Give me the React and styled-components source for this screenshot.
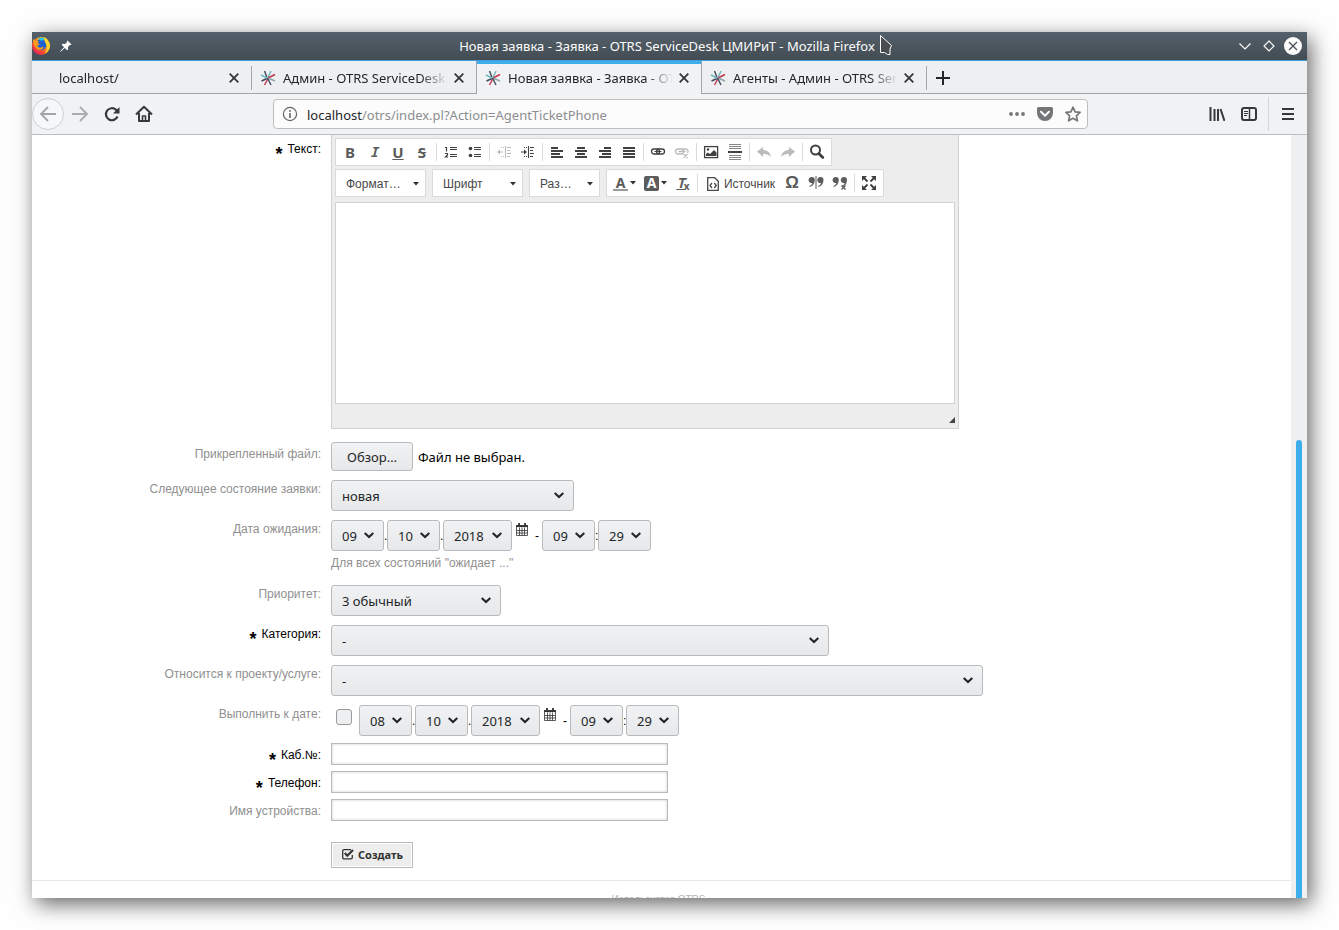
import React from "react";
import styled, { createGlobalStyle, css } from "styled-components";

const GlobalStyle = createGlobalStyle`
  *, *::before, *::after {
    box-sizing: border-box;
  }
  body {
    margin: 0;
    background: #fefefe;
    font-family: "Noto Sans", sans-serif;
    font-size: 13px;
    color: #232629;
  }
  button, input, select, textarea {
    font: inherit;
    color: inherit;
    margin: 0;
  }
  button {
    cursor: pointer;
  }
  svg {
    display: block;
    flex: none;
  }
`;

const tabs = [
  { id: 1, title: "localhost/", plain: true },
  { id: 2, title: "Админ - OTRS ServiceDesk ЦМИРиТ" },
  { id: 3, title: "Новая заявка - Заявка - OTRS ServiceDesk", active: true },
  { id: 4, title: "Агенты - Админ - OTRS ServiceDesk" },
];

/* ---------- icons ---------- */

const Line = ({ size = 16, d, width = 2, children, ...rest }) => (
  <svg
    width={size}
    height={size}
    viewBox={`0 0 ${size} ${size}`}
    fill="none"
    stroke="currentColor"
    strokeWidth={width}
    {...rest}
  >
    {d && <path d={d} />}
    {children}
  </svg>
);

const Firefox = () => (
  <svg width="20" height="20" viewBox="0 0 20 20">
    <defs>
      <linearGradient id="fox" x1="1" y1="0" x2="0.2" y2="1">
        <stop offset="0" stopColor="#fff44f" />
        <stop offset="0.35" stopColor="#ffb21c" />
        <stop offset="0.65" stopColor="#ff5a2a" />
        <stop offset="1" stopColor="#e01563" />
      </linearGradient>
    </defs>
    <circle cx="9" cy="10" r="9" fill="url(#fox)" />
    <circle cx="9" cy="8.5" r="5.6" fill="#1b5fd0" />
    <path d="M6 3c2-1.8 6-1.5 7.5 1-2-.5-3 .2-3.5 1z" fill="#22c5f5" />
    <path
      d="M1 3l3 2c1-.5 2-.3 3 0L5.5 7c1.500.2 2 .8 2 1.5-1 .6-2 .8-2 1.8 1 2 4 1.5 5 .5 1 0 1.500.7.5 1.7C9 14.500 5 14.500 3 11 1.500 8.500.8 6 1 3z"
      fill="#ff9a1f"
    />
    <path d="M12 1c4 2 6.500 6 5.500 11-1 3-3 5-5 6 3-4 3-7 1.500-10C13 6 12 4 12 1z" fill="#ffd52e" />
  </svg>
);

const Pin = () => (
  <svg width="12" height="12" viewBox="0 0 12 12">
    <path
      d="M7.500.5l4 4-1 .6-.6-.2-2 2 .3 2.600-1 .8L4.800 7.900.7 11.800.2 11.300 4.100 7.200 1.700 4.800l.8-1 2.600.3 2-2-.2-.6z"
      fill="#fff"
    />
  </svg>
);

const OtrsMark = () => (
  <svg width="16" height="16" viewBox="0 0 16 16" fill="none" strokeWidth="1.4">
    <path d="M4.500 1L7 7.500M1.500 11L7 8.500" stroke="#3f4a5e" />
    <path d="M11 1L8 7.500M1 5l6 3" stroke="#6fb5bd" />
    <path d="M15 4.500L8 8M8 8.500L4.500 15" stroke="#c8324b" />
    <path d="M8 8l7 3" stroke="#8ea3ad" />
    <path d="M7.500 8l3.500 7" stroke="#3f4a5e" />
  </svg>
);

const Cross = () => <Line size={10} d="M.7.7l8.600 8.600M9.300.7L.7 9.300" width={1.8} stroke="#31363b" />;

const Chevron = () => (
  <svg width="10" height="12" viewBox="0 0 10 12" fill="none" stroke="currentColor" strokeWidth="2.1">
    <path d="M.7 3L5 7l4.300-4" />
  </svg>
);

const Calendar = () => (
  <svg width="12" height="13" viewBox="0 0 12 13" fill="none" stroke="#333">
    <path d="M.5 2.500h11v10H.5zM3.500 4.500v8M6 4.500v8M8.500 4.500v8M.5 7.500h11M.5 10h11" strokeWidth="0.8" />
    <path d="M0 3.200h12" strokeWidth="1.8" />
    <path d="M3 0v3M9 0v3" strokeWidth="1.8" />
  </svg>
);

const Caret = () => (
  <svg width="6" height="4" viewBox="0 0 6 4">
    <path d="M0 0h6L3 3.500z" fill="#333" />
  </svg>
);

const Quote = ({ x }) => (
  <path
    transform={`translate(${x} 2)`}
    d="M3 0a3 3 0 0 1 3 3c0 3.500-2 6-5 7l-.4-1c1.800-.8 2.700-1.800 2.900-3.100A3 3 0 1 1 3 0z"
    fill="currentColor"
    stroke="none"
  />
);

const icons = {
  numbered: (
    <Line d="M7 3.500h7M7 5.500h7M7 10.500h7M7 12.500h7" width={1}>
      <path d="M2 3.500h1.500v4M2 9.500h2.500v1.500L2.500 13h2.500" strokeWidth="1.2" />
    </Line>
  ),
  bulleted: (
    <Line d="M7 3.500h7M7 5.500h7M7 10.500h7M7 12.500h7" width={1}>
      <circle cx="3.5" cy="4.5" r="1.8" fill="currentColor" stroke="none" />
      <circle cx="3.5" cy="11.5" r="1.8" fill="currentColor" stroke="none" />
    </Line>
  ),
  outdent: (
    <Line d="M9.500 2v12M11 3.500h4M11 6.500h3M11 9.500h4M11 12.500h3M2 8h5" width={1}>
      <path d="M1 8l3-2.500v5z" fill="currentColor" stroke="none" />
      <path d="M5 3.500h3M5 12.500h3" strokeDasharray="1 1" />
    </Line>
  ),
  indent: (
    <Line d="M8.500 2v12M10 3.500h4M10 6.500h3M10 9.500h4M10 12.500h3M1 8h5" width={1}>
      <path d="M7 8L4 5.500v5z" fill="currentColor" stroke="none" />
      <path d="M4 3.500h3M4 12.500h3" strokeDasharray="1 1" />
    </Line>
  ),
  left: <Line d="M2 4h7M2 7h12M2 10h9M2 13h12" />,
  center: <Line d="M4 4h8M2 7h12M4 10h8M2 13h12" />,
  right: <Line d="M7 4h7M2 7h12M5 10h9M2 13h12" />,
  justify: <Line d="M2 4h12M2 7h12M2 10h12M2 13h12" />,
  link: (
    <Line width={1.3}>
      <rect x="1.5" y="5" width="8" height="5" rx="2.5" />
      <rect x="6.5" y="5" width="8" height="5" rx="2.5" />
      <path d="M4.500 7.500h7" strokeWidth="1" />
    </Line>
  ),
  unlink: (
    <Line width={1.3}>
      <rect x="1.5" y="5" width="8" height="5" rx="2.5" />
      <path d="M8 5h4a2.500 2.500 0 0 1 1.500 4M4.500 7.500h7M9.500 10l4 4M13.500 10l-4 4" />
    </Line>
  ),
  image: (
    <Line width={1.3}>
      <rect x="1.6" y="2.6" width="13" height="11" />
      <circle cx="5" cy="5.5" r="1.2" fill="currentColor" stroke="none" />
      <path d="M3 12V10l2-1.500 2 1.500 4-4 2.500 2.500V12z" fill="currentColor" stroke="none" />
    </Line>
  ),
  rule: (
    <Line width={1}>
      <path d="M2 .5h12M2 2.500h12M2 4.500h12M2 11.500h12M2 13.500h12M2 15.500h12" stroke="#888" />
      <path d="M1 8h14" strokeWidth="2" />
    </Line>
  ),
  undo: (
    <Line>
      <path d="M1 7.500L7 3v3c4 0 7 2 8 7-2-2.500-5-3-8-3v3z" fill="currentColor" stroke="none" />
    </Line>
  ),
  redo: (
    <Line>
      <path d="M15 7.500L9 3v3c-4 0-7 2-8 7 2-2.500 5-3 8-3v3z" fill="currentColor" stroke="none" />
    </Line>
  ),
  find: (
    <Line>
      <circle cx="6.5" cy="6" r="4.5" />
      <path d="M9.800 9.500l4 4" strokeWidth="2.8" strokeLinecap="round" />
    </Line>
  ),
  source: (
    <Line width={1.3}>
      <path d="M2.700 1.700h7l3.600 3.600v9H2.700z" />
      <path d="M7 7l-2 2.500 2 2.500M9.300 7l2 2.500-2 2.500" />
    </Line>
  ),
  quotes: (
    <Line width={1}>
      <Quote x={0.8} />
      <path d="M8 1v13" />
      <Quote x={9.5} />
    </Line>
  ),
  unquotes: (
    <Line width={1.4}>
      <Quote x={0.8} />
      <Quote x={9} />
      <path d="M9.500 10.500l4 4M13.500 10.500l-4 4" />
    </Line>
  ),
  maximize: (
    <Line width={1.8}>
      <path d="M2 2l4.500 4.500M14 2L9.500 6.500M2 14l4.500-4.500M14 14L9.500 9.500" />
      <path
        d="M1 1h5L1 6zM15 1h-5l5 5zM1 15h5L1 10zM15 15h-5l5-5z"
        fill="currentColor"
        stroke="none"
      />
    </Line>
  ),
};

/* ---------- toolbar ---------- */

const Tool = ({ icon, label, disabled, soft }) => (
  <ToolButton type="button" aria-label={label} disabled={disabled} $soft={soft}>
    {icons[icon]}
  </ToolButton>
);

const EditorToolbar = () => (
  <>
    <ToolRow>
      <ToolGroup>
        <ToolButton type="button" $soft><Letter>B</Letter></ToolButton>
        <ToolButton type="button" $soft><Letter $serif>I</Letter></ToolButton>
        <ToolButton type="button" $soft><Letter $line="underline">U</Letter></ToolButton>
        <ToolButton type="button" $soft><Letter $line="line-through">S</Letter></ToolButton>
        <ToolDivider />
        <Tool icon="numbered" label="Нумерованный список" />
        <Tool icon="bulleted" label="Маркированный список" />
        <ToolDivider />
        <Tool icon="outdent" label="Уменьшить отступ" disabled />
        <Tool icon="indent" label="Увеличить отступ" />
        <ToolDivider />
        <Tool icon="left" label="По левому краю" />
        <Tool icon="center" label="По центру" />
        <Tool icon="right" label="По правому краю" />
        <Tool icon="justify" label="По ширине" />
        <ToolDivider />
        <Tool icon="link" label="Ссылка" />
        <Tool icon="unlink" label="Убрать ссылку" disabled />
        <ToolDivider />
        <Tool icon="image" label="Изображение" />
        <Tool icon="rule" label="Горизонтальная линия" />
        <ToolDivider />
        <Tool icon="undo" label="Отменить" disabled />
        <Tool icon="redo" label="Повторить" disabled />
        <ToolDivider />
        <Tool icon="find" label="Найти" />
      </ToolGroup>
    </ToolRow>
    <ToolRow>
      <Combo type="button">Формат… <Caret /></Combo>
      <Combo type="button">Шрифт <Caret /></Combo>
      <Combo type="button" $small>Раз… <Caret /></Combo>
      <ToolGroup>
        <ToolButton type="button" $wide $soft><ColorLetter>A</ColorLetter><Caret /></ToolButton>
        <ToolButton type="button" $wide $soft><ColorLetter $filled>A</ColorLetter><Caret /></ToolButton>
        <ToolButton type="button" $soft><Letter $serif $line="underline">T</Letter><Small>x</Small></ToolButton>
        <ToolDivider />
        <SourceButton type="button">{icons.source} Источник</SourceButton>
        <ToolButton type="button" $soft><Letter $omega>Ω</Letter></ToolButton>
        <Tool icon="quotes" label="Цитата" soft />
        <Tool icon="unquotes" label="Убрать цитату" soft />
        <ToolDivider />
        <Tool icon="maximize" label="Развернуть" />
      </ToolGroup>
    </ToolRow>
  </>
);

/* ---------- form ---------- */

const Row = ({ label, id, required, offset, children }) => (
  <FormRow>
    <Label htmlFor={id} $required={required} $offset={offset}>
      {required && <Star>*</Star>}
      {label}:
    </Label>
    <Field>{children}</Field>
  </FormRow>
);

const Select = ({ value, width, ...rest }) => (
  <SelectBox $width={width}>
    <select defaultValue={value} {...rest}>
      <option>{value}</option>
    </select>
    <Chevron />
  </SelectBox>
);

const DateTime = ({ id, day }) => (
  <>
    <Select id={id} value={day} width={53} aria-label="День" />
    <Mark>.</Mark>
    <Select value="10" width={53} aria-label="Месяц" />
    <Mark>.</Mark>
    <Select value="2018" width={69} aria-label="Год" />
    <CalendarButton type="button" aria-label="Открыть календарь">
      <Calendar />
    </CalendarButton>
    <Mark $dash>-</Mark>
    <Select value="09" width={53} aria-label="Час" />
    <Mark>:</Mark>
    <Select value="29" width={53} aria-label="Минута" />
  </>
);

const TicketForm = () => (
  <Form onSubmit={(e) => e.preventDefault()}>
    <Row label="Текст" id="body" required offset={5}>
      <Editor>
        <EditorToolbar />
        <EditorText id="body" />
        <EditorFooter>
          <svg width="6" height="6" viewBox="0 0 6 6">
            <path d="M6 0v6H0z" fill="#444" />
          </svg>
        </EditorFooter>
      </Editor>
    </Row>
    <Selects>
      <Row label="Прикрепленный файл" id="file" offset={3}>
        <BrowseButton type="button" id="file">Обзор…</BrowseButton>
        <FileName>Файл не выбран.</FileName>
      </Row>
      <Row label="Следующее состояние заявки" id="state">
        <Select id="state" value="новая" width={243} />
      </Row>
      <Row label="Дата ожидания" id="pending">
        <DateTime id="pending" day="09" />
        <Hint>Для всех состояний "ожидает ..."</Hint>
      </Row>
      <Row label="Приоритет" id="priority">
        <Select id="priority" value="3 обычный" width={170} />
      </Row>
      <Row label="Категория" id="category" required>
        <Select id="category" value="-" width={498} />
      </Row>
      <Row label="Относится к проекту/услуге" id="project">
        <Select id="project" value="-" width={652} />
      </Row>
      <Row label="Выполнить к дате" id="due">
        <Checkbox type="checkbox" id="due" />
        <DateTime day="08" />
      </Row>
    </Selects>
    <Inputs>
      <Row label="Каб.№" id="room" required offset={3}>
        <TextInput id="room" />
      </Row>
      <Row label="Телефон" id="phone" required offset={3}>
        <TextInput id="phone" />
      </Row>
      <Row label="Имя устройства" id="device" offset={3}>
        <TextInput id="device" />
      </Row>
    </Inputs>
    <Actions>
      <CreateButton type="submit">
        <Line size={12} width={1.3}>
          <path d="M10.300 7v2.500a1.300 1.300 0 0 1-1.300 1.300H2A1.300 1.300 0 0 1 .7 9.500v-6.500A1.300 1.300 0 0 1 2 1.700h7" />
          <path d="M2.800 5l2.500 2.700L11 2" strokeWidth="2.2" />
        </Line>
        Создать
      </CreateButton>
    </Actions>
  </Form>
);

/* ---------- browser ---------- */

export default function App() {
  return (
    <Desktop>
      <GlobalStyle />
      <Window>
        <TitleBar>
          <TitleSide>
            <Firefox />
            <Pin />
          </TitleSide>
          <Title>
            Новая заявка - Заявка - OTRS ServiceDesk ЦМИРиТ - Mozilla Firefox
            <Pointer width="14" height="22" viewBox="0 0 14 22">
              <path d="M1.500 1.500v17h4l3 2h2.500v-5.500l1.500-3.500z" fill="#4a4d50" stroke="#fff" />
            </Pointer>
          </Title>
          <TitleSide $end>
            <WindowButton aria-label="Свернуть">
              <Line size={18} d="M3.500 6.500L9 12l5.500-5.500" width={1.2} />
            </WindowButton>
            <WindowButton aria-label="Развернуть">
              <Line size={18} d="M9 4l5 5-5 5-5-5z" width={1.2} />
            </WindowButton>
            <WindowButton aria-label="Закрыть" $close>
              <Line size={18} d="M5 5l8 8M13 5l-8 8" width={1.2} />
            </WindowButton>
          </TitleSide>
        </TitleBar>

        <TabBar>
          {tabs.map((tab) => (
            <React.Fragment key={tab.id}>
              <Tab $active={tab.active} $plain={tab.plain}>
                {!tab.plain && <OtrsMark />}
                <TabTitle>{tab.title}</TabTitle>
                <IconButton aria-label="Закрыть вкладку">
                  <Cross />
                </IconButton>
              </Tab>
              {(tab.plain || tab.id === 4) && <TabDivider />}
            </React.Fragment>
          ))}
          <NewTab aria-label="Новая вкладка">
            <Line size={14} d="M7 0v14M0 7h14" />
          </NewTab>
        </TabBar>

        <NavBar>
          <NavButton $round aria-label="Назад">
            <Line size={18} d="M17 9H2M9 2L2 9l7 7" width={1.8} />
          </NavButton>
          <NavButton $dim aria-label="Вперёд">
            <Line size={18} d="M1 9h15M9 2l7 7-7 7" width={1.8} />
          </NavButton>
          <NavButton aria-label="Обновить">
            <Line size={16} d="M13.500 10.500A6 6 0 1 1 12 3.800L14 6" width={2.2}>
              <path d="M15.500 1v6.500H9z" fill="currentColor" stroke="none" />
            </Line>
          </NavButton>
          <NavButton aria-label="Домой">
            <Line size={18} d="M1 9.500L9 1.800l8 7.700" strokeLinejoin="round">
              <path d="M4 8v8h10V8" />
              <path d="M7.500 16v-5h3v5" strokeWidth="1.6" />
            </Line>
          </NavButton>
          <Spring />
          <AddressBar>
            <Line size={16} width={1.2} stroke="#666">
              <circle cx="8" cy="8" r="6.6" />
              <path d="M8 7v5M8 4v1.800" strokeWidth="1.6" />
            </Line>
            <Address>
              localhost<span>/otrs/index.pl?Action=AgentTicketPhone</span>
            </Address>
            <IconButton aria-label="Действия">
              <svg width="16" height="16" viewBox="0 0 16 16" fill="currentColor">
                <circle cx="2" cy="8" r="1.9" />
                <circle cx="8" cy="8" r="1.9" />
                <circle cx="14" cy="8" r="1.9" />
              </svg>
            </IconButton>
            <IconButton aria-label="Pocket">
              <svg width="16" height="16" viewBox="0 0 16 16">
                <path
                  d="M1.500 1h13A1.500 1.500 0 0 1 16 2.500V7A8 8 0 0 1 0 7V2.500A1.500 1.500 0 0 1 1.500 1z"
                  fill="currentColor"
                />
                <path
                  d="M4 5.800l4 3.800 4-3.800"
                  fill="none"
                  stroke="#fff"
                  strokeWidth="2"
                  strokeLinecap="round"
                />
              </svg>
            </IconButton>
            <IconButton aria-label="В закладки">
              <Line
                size={16}
                d="M8 1.200l2.100 4.600 5 .6-3.700 3.400 1 5L8 12.300l-4.400 2.500 1-5L.9 6.400l5-.6z"
                width={1.7}
                strokeLinejoin="round"
              />
            </IconButton>
          </AddressBar>
          <Spring />
          <NavButton aria-label="Библиотека">
            <Line size={16} d="M1.500 1v14M5.500 3v12M9 3v12M11.500 3l4 12" />
          </NavButton>
          <NavButton aria-label="Боковые панели">
            <Line size={16}>
              <rect x="1" y="2" width="14" height="12" rx="2" />
              <path d="M8.500 2v12" strokeWidth="1.5" />
              <path d="M3 5.500h4M3 7.500h4M3 9.500h3" strokeWidth="1" />
            </Line>
          </NavButton>
          <NavDivider />
          <NavButton aria-label="Меню">
            <Line size={12} d="M0 1h12M0 6h12M0 11h12" />
          </NavButton>
        </NavBar>

        <Viewport>
          <Page>
            <TicketForm />
            <PageFooter>Используется OTRS</PageFooter>
          </Page>
          <Scrollbar>
            <Thumb />
          </Scrollbar>
        </Viewport>
      </Window>
    </Desktop>
  );
}

/* ---------- styles ---------- */

const Desktop = styled.div`
  height: 100vh;
  padding: 32px;
`;

const Window = styled.div`
  display: flex;
  flex-direction: column;
  height: 100%;
  background: #fff;
  box-shadow: 4px 6px 20px rgba(0, 0, 0, 0.6);
`;

const TitleBar = styled.header`
  flex: none;
  display: grid;
  grid-template-columns: 1fr auto 1fr;
  align-items: center;
  height: 29px;
  padding-right: 5px;
  color: #fcfcfc;
  background: linear-gradient(#54606a, #434c54);
  border-bottom: 1px solid #3c9fdb;
`;

const TitleSide = styled.div`
  display: flex;
  align-items: center;
  gap: ${({ $end }) => ($end ? "6px" : "8px")};
  justify-content: ${({ $end }) => ($end ? "flex-end" : "flex-start")};
`;

const Title = styled.div`
  position: relative;
  white-space: nowrap;
`;

const Pointer = styled.svg`
  position: absolute;
  left: calc(100% + 4px);
  top: -3px;
`;

const IconButton = styled.button`
  flex: none;
  display: flex;
  align-items: center;
  justify-content: center;
  padding: 0;
  border: 0;
  background: none;
`;

const WindowButton = styled(IconButton)`
  border-radius: 50%;
  ${({ $close }) =>
    $close &&
    css`
      background: #fcfcfc;
      color: #434c54;
    `}
`;

const TabBar = styled.nav`
  flex: none;
  display: flex;
  align-items: center;
  height: 33px;
  background: #eeeff1;
  box-shadow: inset 0 -1px #a3a5a7;
`;

const Tab = styled.div`
  display: flex;
  align-items: center;
  gap: 6px;
  flex: 0 1 ${({ $plain, $active }) => ($plain ? 219 : $active ? 226 : 224)}px;
  min-width: 0;
  height: 100%;
  padding: 0 12px 0 ${({ $plain }) => ($plain ? 26 : 8)}px;
  ${({ $active }) =>
    $active &&
    css`
      background: #f1f2f4;
      border: 1px solid #a3a5a7;
      border-width: 0 1px;
      box-shadow: inset 0 3px #3daee9;
    `}
`;

const TabTitle = styled.span`
  flex: 1;
  min-width: 0;
  margin-left: 1px;
  overflow: hidden;
  white-space: nowrap;
  mask-image: linear-gradient(to left, transparent, #000 28px);
`;

const TabDivider = styled.span`
  flex: none;
  width: 1px;
  height: 24px;
  background: #a3a5a7;
`;

const NewTab = styled(IconButton)`
  margin-left: 9px;
`;

const NavBar = styled.div`
  flex: none;
  display: flex;
  align-items: center;
  height: 41px;
  padding-right: 3px;
  background: #f1f2f4;
  border-bottom: 1px solid #bbbdbf;
`;

const NavButton = styled(IconButton)`
  width: 32px;
  height: 32px;
  color: #35393d;
  ${({ $dim }) => $dim && "color: #a9abad;"}
  ${({ $round }) =>
    $round &&
    css`
      color: #a3a5a7;
      background: #f6f7f8;
      border: 1px solid #cdcfd0;
      border-radius: 50%;
    `}
`;

const Spring = styled.span`
  flex: 1 1 0;
  max-width: 113px;
`;

const AddressBar = styled.div`
  flex: 1;
  display: flex;
  align-items: center;
  gap: 12px;
  height: 30px;
  padding: 0 6px 0 8px;
  color: #737577;
  background: #fcfcfc;
  border: 1px solid #bbbdbf;
  border-radius: 4px;
`;

const Address = styled.div`
  flex: 1;
  margin-left: -3px;
  padding-top: 1px;
  color: #232629;
  span {
    color: #8c8e90;
  }
`;

const NavDivider = styled.span`
  width: 1px;
  height: 34px;
  margin: 0 3px;
  background: #d4d6d8;
`;

const Viewport = styled.div`
  flex: 1;
  display: flex;
  min-height: 0;
  overflow: hidden;
`;

const Page = styled.main`
  flex: 1;
  min-width: 0;
  font-family: "Liberation Sans", sans-serif;
  font-size: 12px;
`;

const Scrollbar = styled.div`
  display: flex;
  align-items: flex-end;
  width: 16px;
  padding: 0 5px;
  background: #eff0f1;
`;

const Thumb = styled.div`
  flex: 1;
  height: 60%;
  background: #3daee9;
  border-radius: 3px 3px 0 0;
`;

const Form = styled.form`
  display: flex;
  flex-direction: column;
`;

const Selects = styled.div`
  display: grid;
  gap: 9px;
  margin-top: 13px;
`;

const Inputs = styled.div`
  display: grid;
  gap: 6px;
  margin-top: 7px;
`;

const FormRow = styled.div`
  display: grid;
  grid-template-columns: 289px minmax(0, 1fr);
  column-gap: 10px;
  align-items: start;
`;

const Label = styled.label`
  display: flex;
  justify-content: flex-end;
  gap: 5px;
  padding-top: ${({ $offset = 0 }) => $offset}px;
  line-height: 18px;
  color: ${({ $required }) => ($required ? "#000" : "#8f8f8f")};
`;

const Star = styled.span`
  font-size: 18px;
  font-weight: bold;
  line-height: 28px;
  height: 18px;
`;

const Field = styled.div`
  display: flex;
  flex-wrap: wrap;
  align-items: flex-start;
`;

const control = css`
  color: #232629;
  background: linear-gradient(#f1f2f3, #e7e8ea);
  border: 1px solid #b8babb;
  border-radius: 3px;
`;

const SelectBox = styled.div`
  display: grid;
  grid-template-columns: 1fr auto;
  align-items: center;
  width: ${({ $width }) => $width}px;
  select {
    grid-area: 1 / 1 / 2 / 3;
    width: 100%;
    height: 31px;
    padding: 0 10px;
    font-family: "Noto Sans", sans-serif;
    font-size: 13px;
    appearance: none;
    ${control}
  }
  svg {
    grid-area: 1 / 2;
    margin-right: 10px;
    pointer-events: none;
  }
`;

const Mark = styled.span`
  width: ${({ $dash }) => ($dash ? "14px" : "3px")};
  padding-right: ${({ $dash }) => ($dash ? "3px" : "0")};
  text-align: right;
  line-height: 33px;
  height: 31px;
  color: #000;
`;

const CalendarButton = styled(IconButton)`
  margin: 3px 0 0 4px;
`;

const Hint = styled.p`
  flex-basis: 100%;
  margin: 0;
  line-height: 25px;
  color: #8f8f8f;
`;

const Checkbox = styled.input`
  appearance: none;
  width: 16px;
  height: 16px;
  && {
    margin: 4px 7px 0 5px;
  }
  background: #eeeff0;
  border: 1px solid #999b9d;
  border-radius: 3px;
`;

const BrowseButton = styled.button`
  width: 82px;
  height: 29px;
  padding: 0;
  font-family: "Noto Sans", sans-serif;
  font-size: 13px;
  ${control}
`;

const FileName = styled.span`
  margin-left: 5px;
  font-family: "Noto Sans", sans-serif;
  font-size: 13px;
  line-height: 30px;
  height: 29px;
  color: #000;
`;

const TextInput = styled.input`
  width: 337px;
  height: 22px;
  padding: 0 4px;
  background: #fff;
  border: 1px solid #bbb;
  box-shadow: inset 0 0 3px #ccc;
`;

const Actions = styled.div`
  margin-top: 21px;
  padding-left: 299px;
`;

const CreateButton = styled.button`
  display: flex;
  align-items: center;
  gap: 4px;
  height: 26px;
  padding: 0 9px 2px 10px;
  font-family: "Noto Sans", sans-serif;
  font-size: 11px;
  font-weight: bold;
  color: #333;
  background: #ededed;
  border: 1px solid #bbb;
  box-shadow: inset 0 0 0 1px #fff;
`;

const PageFooter = styled.footer`
  margin-top: 12px;
  padding: 12px 6px 0 0;
  border-top: 1px solid #e9e9e9;
  font-size: 10px;
  line-height: 14px;
  text-align: center;
  color: #b5b5b5;
`;

const Editor = styled.div`
  flex: 0 1 628px;
  padding: 3px 3px 0;
  background: #ededed;
  border: 1px solid #d1d1d1;
  border-top: 0;
`;

const ToolRow = styled.div`
  display: flex;
  gap: 6px;
  margin-bottom: 3px;
  & + & {
    margin-bottom: 5px;
  }
`;

const ToolGroup = styled.div`
  display: flex;
  align-items: center;
  height: 28px;
  padding: 0 2px;
  background: #fff;
  border: 1px solid #dadada;
`;

const ToolButton = styled(IconButton)`
  width: ${({ $wide }) => ($wide ? "31px" : "24px")};
  height: 26px;
  gap: 2px;
  color: ${({ $soft }) => ($soft ? "#5c5c5c" : "#404040")};
  &:disabled {
    opacity: 0.35;
  }
`;

const ToolDivider = styled.span`
  width: 1px;
  height: 18px;
  margin: 0 2px;
  background: #dadada;
`;

const Letter = styled.span`
  font: bold 15px/16px "Noto Sans", sans-serif;
  ${({ $serif }) => $serif && `font: italic bold 14px/16px "Noto Sans Mono", "DejaVu Sans Mono", monospace;`}
  ${({ $omega }) => $omega && `font: bold 17px/16px "Liberation Sans", sans-serif;`}
  text-decoration: ${({ $line }) => $line || "none"};
`;

const Small = styled.sub`
  margin-left: -3px;
  padding-top: 6px;
  font: bold 10px/16px "Noto Sans", sans-serif;
`;

const ColorLetter = styled.span`
  width: 15px;
  font: bold 14px/13px "Noto Sans", sans-serif;
  border-bottom: 2px solid #999;
  ${({ $filled }) =>
    $filled &&
    css`
      color: #fff;
      background: #5c5c5c;
      border-color: #5c5c5c;
      border-radius: 2px;
    `}
`;

const SourceButton = styled(ToolButton)`
  width: 80px;
  gap: 3px;
  padding-top: 1px;
  font-size: 12px;
  color: #484848;
`;

const Combo = styled.button`
  display: flex;
  align-items: center;
  justify-content: space-between;
  width: ${({ $small }) => ($small ? "71px" : "91px")};
  height: 28px;
  padding: 2px 6px 0 10px;
  color: #484848;
  background: #fff;
  border: 1px solid #dadada;
`;

const EditorText = styled.textarea`
  display: block;
  width: 100%;
  height: 202px;
  resize: none;
  background: #fff;
  border: 1px solid #d1d1d1;
`;

const EditorFooter = styled.div`
  display: flex;
  align-items: flex-end;
  justify-content: flex-end;
  height: 24px;
  padding-bottom: 5px;
`;
